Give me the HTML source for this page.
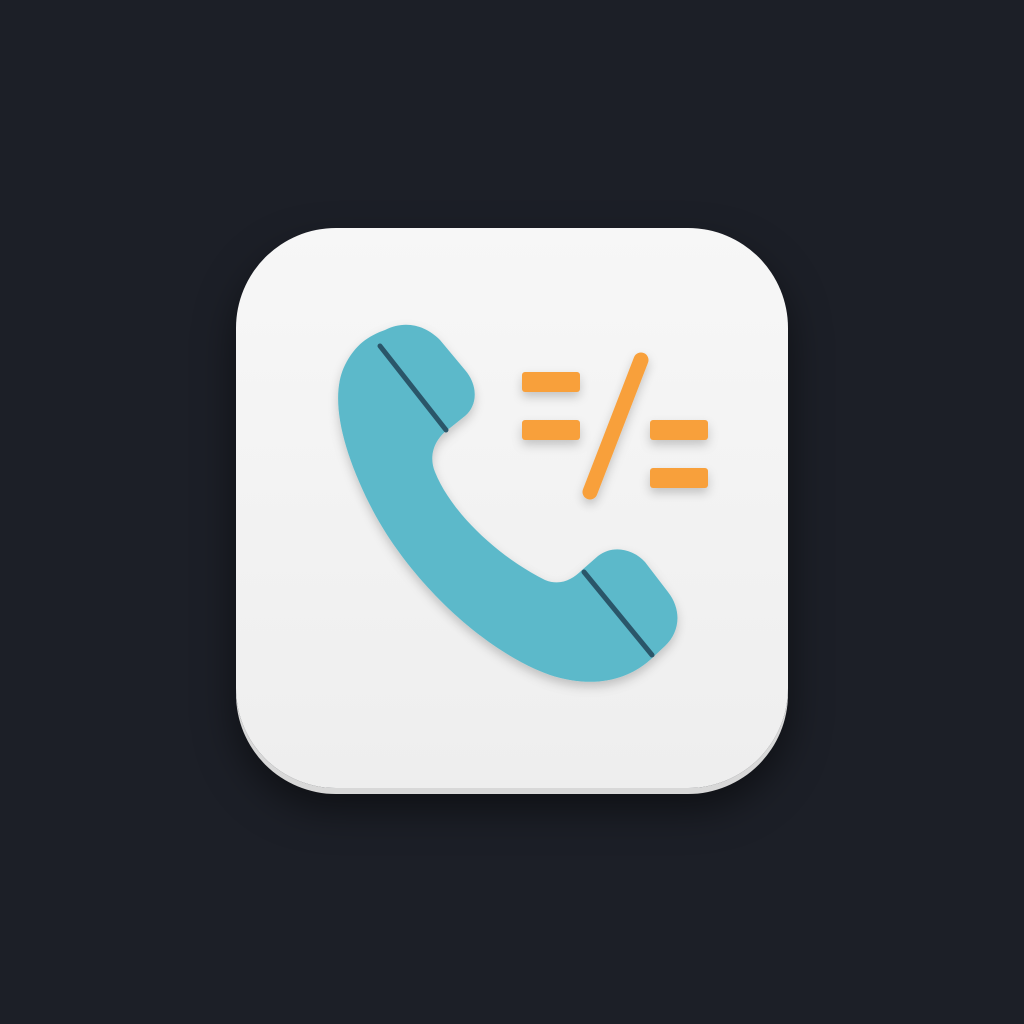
<!DOCTYPE html>
<html><head><style>
html,body{margin:0;padding:0;width:1024px;height:1024px;background:#1c1f27;overflow:hidden}
.tile{position:absolute;left:236px;top:228px;width:552px;height:560px;border-radius:100px;background:linear-gradient(#f7f7f7,#eeeeee);box-shadow:0 6px 0 #d8d8d8,0 20px 40px rgba(0,0,0,.5)}
svg{position:absolute;left:0;top:0}
</style></head><body>
<div class="tile"></div>
<svg width="1024" height="1024" viewBox="0 0 1024 1024">
<defs><filter id="s" x="-20%" y="-20%" width="140%" height="140%"><feDropShadow dx="0" dy="5" stdDeviation="5" flood-color="#000" flood-opacity=".2"/></filter></defs>
<g filter="url(#s)">
<path d="M385 330 C405 320 425 325 440 340 L465 370 C478 385 478 405 465 416 L450 428 C435 438 428 455 435 472 C450 510 495 555 545 580 C560 586 572 580 582 570 L598 556 C612 545 632 548 645 562 L668 592 C682 610 680 632 665 646 L650 660 C625 682 590 688 550 675 C480 650 405 575 370 505 C340 445 330 395 345 365 C355 345 368 336 385 330 Z" fill="#5cb9ca"/>
<path d="M380 346 L446 430" stroke="#2b5669" stroke-width="5" stroke-linecap="round"/>
<path d="M584 572 L652 655" stroke="#2b5669" stroke-width="5" stroke-linecap="round"/>
<g fill="#f8a03b">
<rect x="522" y="372" width="58" height="20" rx="3"/>
<rect x="522" y="420" width="58" height="20" rx="3"/>
<rect x="650" y="420" width="58" height="20" rx="3"/>
<rect x="650" y="468" width="58" height="20" rx="3"/>
</g>
<path d="M641 360 L590 492" stroke="#f8a03b" stroke-width="15" stroke-linecap="round"/>
</g>
</svg>
</body></html>
